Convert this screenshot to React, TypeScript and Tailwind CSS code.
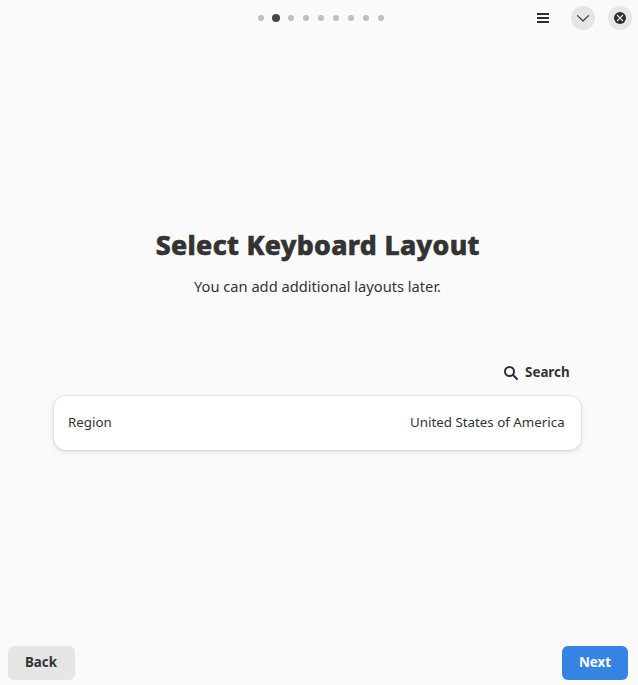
export default function App() {
  const dots = [0, 1, 2, 3, 4, 5, 6, 7, 8];
  return (
    <main className="flex h-[685px] w-[638px] flex-col overflow-hidden bg-[#fafafa] font-['Noto_Sans',sans-serif] text-[#333333]">
      <header className="grid h-9 grid-cols-[253.8px_135px_1fr] items-center">
        <span />
        <nav className="flex items-center">
          {dots.map((i) => (
            <span key={i} className="flex h-2 w-[15px] items-center justify-center">
              <span className={i === 1 ? "size-2 shrink-0 rounded-full bg-[#474747]" : "size-[6px] rounded-full bg-[#bfbfbf]"} />
            </span>
          ))}
        </nav>
        <div className="flex items-center justify-end pr-[6px]">
          <button aria-label="Menu" className="mr-5">
            <svg width="16" height="16" viewBox="0 0 16 16" fill="#2e2e2e"><path d="M2 3h12v2H2zM2 7h12v2H2zM2 11h12v2H2z" /></svg>
          </button>
          <button aria-label="Minimize" className="mr-[13px] flex size-6 items-center justify-center rounded-full bg-[#e6e6e6]">
            <svg width="16" height="16" viewBox="0 0 16 16" fill="none" stroke="#2e2e2e" strokeWidth="1.1"><path d="m2.2 5.3 5.8 5.6 5.8-5.6" /></svg>
          </button>
          <button aria-label="Close" className="flex size-6 items-center justify-center rounded-full bg-[#e6e6e6]">
            <svg width="16" height="16" viewBox="0 0 16 16"><circle cx="8" cy="8" r="6" fill="#2e2e2e" /><path d="m5 5 6 6m0-6-6 6" stroke="#e6e6e6" strokeWidth="1.1" /></svg>
          </button>
        </div>
      </header>
      <section className="flex flex-1 flex-col pt-[189px]">
        <h1 className="pr-[2.5px] text-center text-[26.67px] leading-[40px] font-extrabold tracking-[0.33px] [-webkit-text-stroke:0.6px_#333333]">Select Keyboard Layout</h1>
        <p className="mt-[11px] pr-[3px] text-center text-[14.67px] leading-5">You can add additional layouts later.</p>
        <button className="mt-[61px] mr-[68.4px] flex h-8 items-center gap-[6px] self-end text-[13.33px] font-bold">
          <svg width="16" height="16" viewBox="0 0 16 16" fill="none" stroke="#2e2e2e" strokeWidth="2"><circle cx="6.5" cy="6.5" r="4.5" /><path d="m10 10 4 4" strokeLinecap="round" /></svg>
          Search
        </button>
        <div className="mt-[7px] ml-[54px] flex h-[54px] w-[527px] items-center justify-between rounded-xl bg-white pr-[16.4px] pl-[14px] text-[13.33px] shadow-[0_0_0_1px_rgba(0,0,0,0.03),0_1px_3px_1px_rgba(0,0,0,0.07),0_2px_6px_2px_rgba(0,0,0,0.03)]">
          <span>Region</span><span>United States of America</span>
        </div>
      </section>
      <footer className="flex justify-between pr-[10px] pb-[5px] pl-2 text-[13.33px] font-bold">
        <button className="h-[34px] w-[67px] rounded-md bg-[#e6e6e6] pr-px">Back</button>
        <button className="h-[34px] w-[66px] rounded-md bg-[#3584e4] text-white">Next</button>
      </footer>
    </main>
  );
}
